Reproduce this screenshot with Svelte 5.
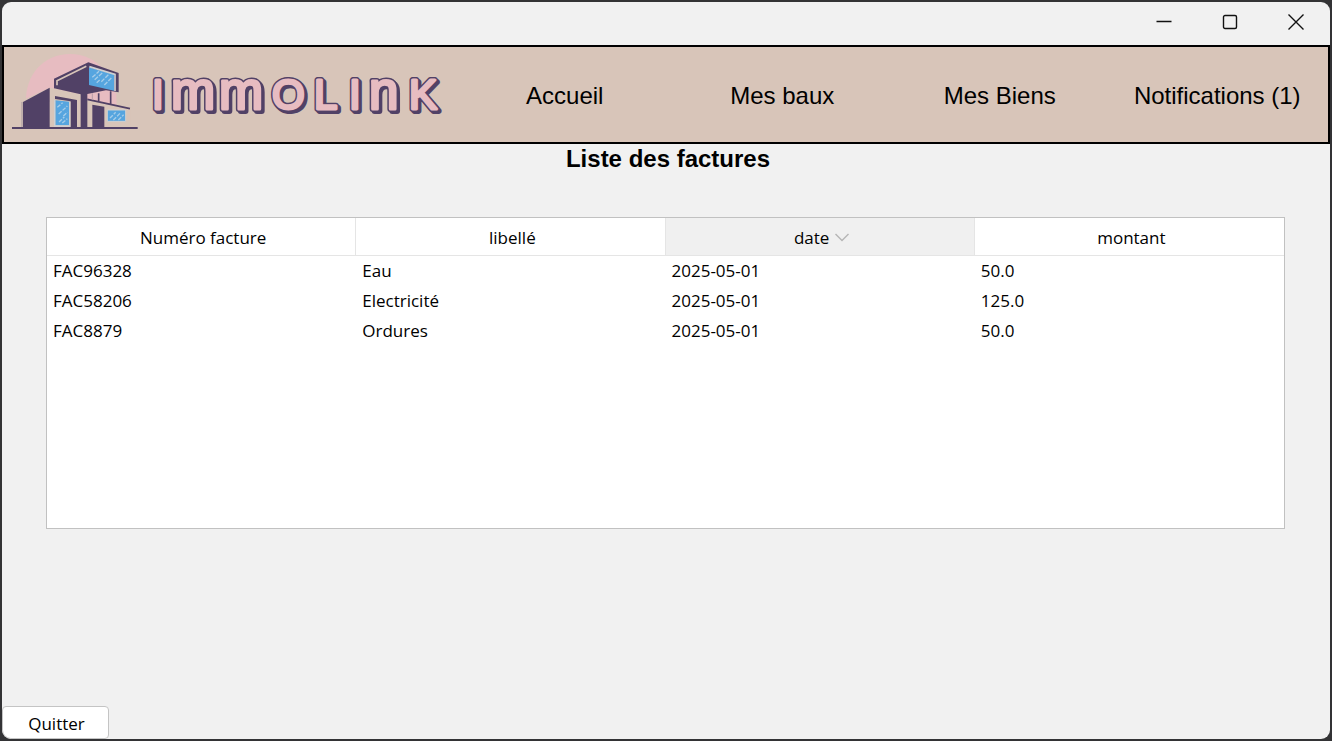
<script>
  const links = ['Accueil', 'Mes baux', 'Mes Biens', 'Notifications (1)'];
  const columns = [
    { key: 'numero', label: 'Numéro facture' },
    { key: 'libelle', label: 'libellé' },
    { key: 'date', label: 'date' },
    { key: 'montant', label: 'montant' }
  ];
  const invoices = [
    { numero: 'FAC96328', libelle: 'Eau', date: '2025-05-01', montant: '50.0' },
    { numero: 'FAC58206', libelle: 'Electricité', date: '2025-05-01', montant: '125.0' },
    { numero: 'FAC8879', libelle: 'Ordures', date: '2025-05-01', montant: '50.0' }
  ];
  let sortKey = $state('date');
  let rows = $derived(
    [...invoices].sort((a, b) => a[sortKey].localeCompare(b[sortKey], 'fr', { numeric: true }))
  );
</script>

{#snippet wordmark()}
  <tspan class="cap" x="152">I</tspan><tspan class="low" x="171 219">mm</tspan><tspan
    class="cap" x="272 314 349">OLI</tspan><tspan class="low" x="369">n</tspan><tspan
    class="cap" x="409">K</tspan>
{/snippet}

<div class="desktop">
  <div class="window">
    <div class="titlebar">
      <button aria-label="Réduire">
        <svg width="16" height="16" viewBox="0 0 16 16"><path d="M0.5 7.5H15.5" /></svg>
      </button>
      <button aria-label="Agrandir">
        <svg width="16" height="16" viewBox="0 0 16 16"><rect x="1.5" y="1.5" width="13" height="13" rx="1.5" /></svg>
      </button>
      <button aria-label="Fermer">
        <svg width="16" height="16" viewBox="0 0 16 16"><path d="M0.5 0.5L15.5 15.5M15.5 0.5L0.5 15.5" /></svg>
      </button>
    </div>

    <header>
      <svg class="logo" viewBox="4 47 446 95" role="img" aria-label="Immolink">
        <g transform="translate(0 40) scale(0.33333)">
          <path d="M78 190C74 105 130 42 211 42C290 42 350 110 349 195L330 240H90Z" fill="#e7bcc1" />
          <path d="M63 183L149 143L166 146L242 163L262 178L392 205V262H63Z" fill="#d8c5b9" />
          <path d="M262 152L349 158V193L262 178Z" fill="#e7bcc1" />
          <path d="M69 186L149 143V264H69Z" fill="#514166" />
          <path d="M66 186V264" stroke="#a698a0" stroke-width="3" />
          <path d="M162 116L265 67L356 99V157L318 151L262 162V264H242V163L162 145Z" fill="#514166" />
          <path d="M171 136V122L259 79" fill="none" stroke="#d8c5b9" stroke-width="5" />
          <path d="M267 82L342 103V152L267 135Z" fill="#56a5df" />
          <path d="M268 80L345 103V153" fill="none" stroke="#cfd0d2" stroke-width="5" />
          <path d="M277 112L297 94M284 119L307 99M304 125L325 104M313 135L334 114M290 128L299 120"
            stroke="#a6cde9" stroke-width="4" stroke-dasharray="13 4" />
          <path d="M165 168L231 180V264H212V184L165 177Z" fill="#514166" />
          <path d="M166 181L208 185V256H166Z" fill="#56a5df" />
          <path d="M164 180V258H209V186" fill="none" stroke="#cfd0d2" stroke-width="4" />
          <path d="M172 202L188 188M176 222L202 198M177 246L193 231M190 228L202 217M187 249L202 236"
            stroke="#a6cde9" stroke-width="4" stroke-dasharray="12 4" />
          <path d="M277 194L313 200V264H277Z" fill="#514166" />
          <path d="M262 178L390 206M296 160V184M332 154V193" stroke="#514166" stroke-width="5" />
          <path d="M277 160V180" stroke="#b79ba7" stroke-width="3" />
          <path d="M322 210H377V244H322Z" fill="#56a5df" stroke="#cfd0d2" stroke-width="3" />
          <path d="M330 234L347 217M340 240L361 219M355 240L371 224"
            stroke="#a6cde9" stroke-width="4" stroke-dasharray="12 4" />
          <path d="M36 264H413" stroke="#514166" stroke-width="6" />
        </g>
        <text class="word shade" y="109" aria-hidden="true" transform="translate(2 2)">{@render wordmark()}</text>
        <text class="word edge" y="109" aria-hidden="true">{@render wordmark()}</text>
        <text class="word face" y="109">{@render wordmark()}</text>
      </svg>
      <nav>
        {#each links as link}
          <a href="#{link}">{link}</a>
        {/each}
      </nav>
    </header>

    <main>
      <h1>Liste des factures</h1>
      <div class="panel">
        <table>
          <thead>
            <tr>
              {#each columns as column}
                <th class:sorted={sortKey === column.key}>
                  <button onclick={() => (sortKey = column.key)}>
                    {column.label}
                    {#if sortKey === column.key}
                      <svg width="14" height="9" viewBox="0 0 14 9"><path d="M0.5 1L7 7.5L13.5 1" /></svg>
                    {/if}
                  </button>
                </th>
              {/each}
            </tr>
          </thead>
          <tbody>
            {#each rows as row}
              <tr>
                {#each columns as column}
                  <td>{row[column.key]}</td>
                {/each}
              </tr>
            {/each}
          </tbody>
        </table>
      </div>
    </main>

    <footer>
      <button class="quit">Quitter</button>
    </footer>
  </div>
</div>

<style>
  :global(body) {
    background: #333;
  }
  .desktop {
    box-sizing: border-box;
    min-height: 100vh;
    padding: 2px;
    display: flex;
    background: #333335;
  }
  .window {
    flex: 1;
    display: flex;
    flex-direction: column;
    overflow: hidden;
    border-radius: 9px;
    background: #f1f1f1;
    color: #000;
    font-family: 'Open Sans', 'Noto Sans', sans-serif;
    font-size: 17px;
  }
  button {
    font: inherit;
    color: inherit;
    border: 0;
    background: none;
    padding: 0;
  }
  .titlebar {
    display: flex;
    justify-content: flex-end;
    height: 43px;
  }
  .titlebar button {
    display: grid;
    place-items: center;
    width: 66px;
    padding-right: 2px;
    padding-bottom: 3px;
  }
  .titlebar svg {
    fill: none;
    stroke: #111;
    stroke-width: 1.4;
  }
  header {
    display: flex;
    align-items: center;
    border: 2px solid #000;
    background: #d8c5b9;
  }
  .logo {
    display: block;
    flex: none;
    width: 446px;
    height: 95px;
  }
  nav {
    flex: 1;
    display: grid;
    grid-template-columns: repeat(4, 1fr);
    padding: 2px 2px 0 6px;
    text-align: center;
    font: 24px/28px 'Liberation Sans', Arial, sans-serif;
  }
  nav a {
    color: inherit;
    text-decoration: none;
    white-space: nowrap;
  }
  .word {
    font-family: 'Liberation Sans', Arial, sans-serif;
    stroke-linejoin: round;
    stroke-linecap: round;
  }
  .cap {
    font-size: 42px;
  }
  .low {
    font-size: 53px;
  }
  .shade,
  .edge {
    fill: #514166;
    stroke: #514166;
    stroke-width: 6px;
  }
  .face {
    fill: #e7bcc1;
    stroke: #e7bcc1;
    stroke-width: 3px;
  }
  main {
    flex: 1;
    display: flex;
    flex-direction: column;
  }
  h1 {
    margin: 0 0 44px;
    padding-left: 4px;
    text-align: center;
    font: bold 24px/29px 'Liberation Sans', Arial, sans-serif;
  }
  .panel {
    box-sizing: border-box;
    min-height: 312px;
    margin: 0 45px 0 44px;
    border: 1px solid #c1c1c1;
    background: #fff;
  }
  table {
    width: 100%;
    table-layout: fixed;
    border-collapse: separate;
    border-spacing: 0;
  }
  th {
    height: 37px;
    padding: 0;
    border-right: 1px solid #e5e5e5;
    border-bottom: 1px solid #e5e5e5;
    font-weight: 400;
  }
  th:last-child {
    border-right: 0;
  }
  th.sorted {
    background: #f0f0f0;
  }
  th button {
    display: flex;
    align-items: center;
    justify-content: center;
    gap: 6px;
    width: 100%;
    height: 37px;
    padding: 1px 0 0 4px;
  }
  th svg {
    fill: none;
    stroke: #b5b5b5;
    stroke-width: 1.4;
  }
  td {
    height: 30px;
    padding: 0 6px;
    line-height: 30px;
  }
  footer {
    display: flex;
  }
  .quit {
    width: 107px;
    height: 33px;
    padding: 2px 0 0 2px;
    border: 1px solid #c4c4c4;
    border-radius: 4px 4px 4px 9px;
    background: #fff;
  }
</style>
